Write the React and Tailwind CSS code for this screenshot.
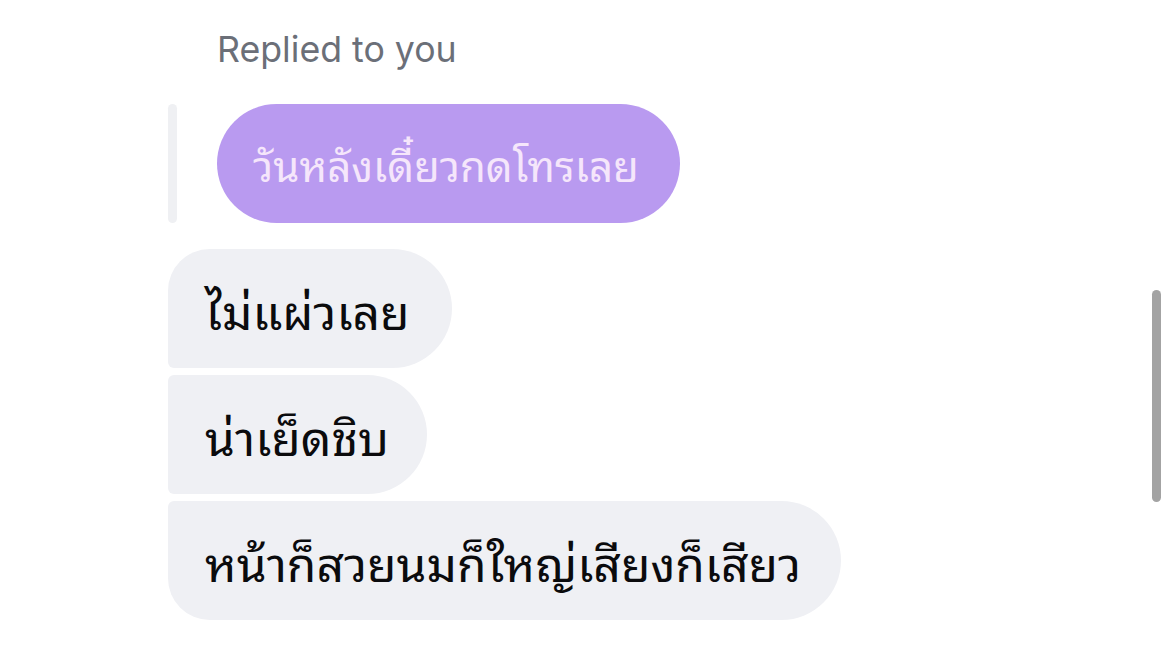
import React from "react";

const thai = { fontFamily: '"Noto Sans Thai Looped", "Noto Serif Thai", Loma, Garuda, "Tlwg Typo", Sarabun, "Noto Sans Thai", sans-serif' };

export default function App() {
  return (
    <div className="w-[1170px] h-[650px] bg-white relative overflow-hidden font-['Inter',sans-serif]">
      <div className="flex flex-col pl-[168px] pt-[27px]">
        {/* reply label */}
        <div className="pl-[49px] text-[35.7px] leading-[44px] text-[#6b6f78]">Replied to you</div>

        {/* quoted message */}
        <div className="flex mt-[33px] h-[119px]">
          <div className="w-[9px] rounded-full bg-[#eff0f3]" />
          <div
            className="ml-[40px] pl-[36px] pr-[41px] rounded-full bg-[#b99af0] text-[#f5e6fb] text-[42px] flex items-center"
            style={thai}
          >
            วันหลังเดี๋ยวกดโทรเลย
          </div>
        </div>

        {/* received messages */}
        <div className="flex flex-col items-start gap-[7px] mt-[26px] text-[48px] text-[#0b0b0d]" style={thai}>
          <div className="h-[119px] flex items-center pl-[37px] pr-[42px] bg-[#eff0f4] rounded-tl-[42px] rounded-bl-[6px] rounded-r-[60px]">
            ไม่แผ่วเลย
          </div>
          <div className="h-[119px] flex items-center pl-[37px] pr-[38px] bg-[#eff0f4] rounded-l-[6px] rounded-r-[60px]">
            น่าเย็ดชิบ
          </div>
          <div className="h-[119px] flex items-center pl-[37px] pr-[40px] bg-[#eff0f4] rounded-tl-[6px] rounded-bl-[42px] rounded-r-[60px]">
            หน้าก็สวยนมก็ใหญ่เสียงก็เสียว
          </div>
        </div>
      </div>

      {/* scrollbar */}
      <div className="absolute left-[1152px] top-[290px] w-[9px] h-[212px] rounded-full bg-[#a3a3a3]" />
    </div>
  );
}
